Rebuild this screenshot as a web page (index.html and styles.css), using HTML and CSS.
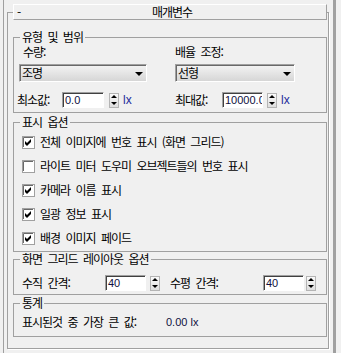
FILE: index.html
```html
<!DOCTYPE html>
<html lang="ko">
<head>
<meta charset="utf-8">
<title>매개변수</title>
<link rel="stylesheet" href="styles.css">
</head>
<body>
<div class="panel">
 <div class="rollout">
  <div class="rollout-title"><span class="toggle">-</span><span class="caption">매개변수</span></div>

  <fieldset class="group group-range">
   <legend>유형 및 범위</legend>
   <div class="range">
    <div class="range-col range-left">
     <div class="label">수량:</div>
     <div class="select"><span>조명</span><i class="caret"></i></div>
     <div class="spin-row">
      <span class="spin-label">최소값:</span>
      <span class="field">0.0</span>
      <span class="spinner"><i class="up"></i><i class="down"></i></span>
      <span class="unit">lx</span>
     </div>
    </div>
    <div class="range-col range-right">
     <div class="label">배율 조정:</div>
     <div class="select"><span>선형</span><i class="caret"></i></div>
     <div class="spin-row">
      <span class="spin-label">최대값:</span>
      <span class="field">10000.0</span>
      <span class="spinner"><i class="up"></i><i class="down"></i></span>
      <span class="unit">lx</span>
     </div>
    </div>
   </div>
  </fieldset>

  <fieldset class="group group-display">
   <legend>표시 옵션</legend>
   <div class="check-row"><svg class="cb" width="13" height="13" viewBox="0 0 13 13"><rect x=".5" y=".5" width="12" height="12" fill="#fff" stroke="#a0a0a0"/><path d="M1.5 11V1.5H11" fill="none" stroke="#696969"/><path d="M3 5l2 2 4-4v3l-4 4-2-2z"/></svg><span>전체 이미지에 번호 표시 (화면 그리드)</span></div>
   <div class="check-row"><svg class="cb" width="13" height="13" viewBox="0 0 13 13"><rect x=".5" y=".5" width="12" height="12" fill="#fff" stroke="#a0a0a0"/><path d="M1.5 11V1.5H11" fill="none" stroke="#696969"/></svg><span>라이트 미터 도우미 오브젝트들의 번호 표시</span></div>
   <div class="check-row"><svg class="cb" width="13" height="13" viewBox="0 0 13 13"><rect x=".5" y=".5" width="12" height="12" fill="#fff" stroke="#a0a0a0"/><path d="M1.5 11V1.5H11" fill="none" stroke="#696969"/><path d="M3 5l2 2 4-4v3l-4 4-2-2z"/></svg><span>카메라 이름 표시</span></div>
   <div class="check-row"><svg class="cb" width="13" height="13" viewBox="0 0 13 13"><rect x=".5" y=".5" width="12" height="12" fill="#fff" stroke="#a0a0a0"/><path d="M1.5 11V1.5H11" fill="none" stroke="#696969"/><path d="M3 5l2 2 4-4v3l-4 4-2-2z"/></svg><span>일광 정보 표시</span></div>
   <div class="check-row"><svg class="cb" width="13" height="13" viewBox="0 0 13 13"><rect x=".5" y=".5" width="12" height="12" fill="#fff" stroke="#a0a0a0"/><path d="M1.5 11V1.5H11" fill="none" stroke="#696969"/><path d="M3 5l2 2 4-4v3l-4 4-2-2z"/></svg><span>배경 이미지 페이드</span></div>
  </fieldset>

  <fieldset class="group group-grid">
   <legend>화면 그리드 레이아웃 옵션</legend>
   <div class="grid-row">
    <div class="grid-cell grid-left">
     <span class="spin-label">수직 간격:</span>
     <span class="field">40</span>
     <span class="spinner"><i class="up"></i><i class="down"></i></span>
    </div>
    <div class="grid-cell grid-right">
     <span class="spin-label">수평 간격:</span>
     <span class="field">40</span>
     <span class="spinner"><i class="up"></i><i class="down"></i></span>
    </div>
   </div>
  </fieldset>

  <fieldset class="group group-stats">
   <legend>통계</legend>
   <div class="stats-row"><span class="stats-label">표시된것 중 가장 큰 값:</span><span class="stats-value">0.00 lx</span></div>
  </fieldset>
 </div>
</div>
</body>
</html>
```

FILE: styles.css
```css
html,body{margin:0;padding:0;}
body{background-color:#f0f0f0;color:#000;font-family:"Noto Sans CJK KR","Noto Sans",sans-serif;font-size:12px;line-height:14px;letter-spacing:-1px;word-spacing:3px;}

/* frame */
.panel{margin-left:3px;width:329px;height:353px;border-left:1px solid #a0a0a0;border-right:3px solid #a0a0a0;overflow:hidden;}
.rollout{margin:12px 4px 0 3px;padding:0 1px 11px 5px;border:1px solid #a0a0a0;box-shadow:1px 1px 0 #fff;}
.rollout-title{display:flex;align-items:center;height:16px;margin-top:-9px;box-sizing:border-box;border-top:1px solid #fff;border-left:1px solid #fff;border-right:1px solid #a0a0a0;border-bottom:1px solid #a0a0a0;background-color:#f0f0f0;position:relative;}
.toggle{position:absolute;left:3px;top:0px;}
.caption{flex:1;text-align:center;padding-left:4px;}

/* group boxes */
.group{margin:0;padding:0;border:1px solid #a0a0a0;min-width:0;}
.group legend{margin-left:6px;padding:0 2px;height:14px;}
.group-range{margin-top:10px;padding-bottom:3px;}
.group-display{margin-top:2px;padding-bottom:1px;}
.group-grid{margin-top:0px;padding-bottom:2px;}
.group-stats{margin-top:1px;padding-bottom:7px;}

/* type and range */
.range{display:grid;grid-template-columns:161px 1fr;}
.label{margin-top:1px;height:14px;}
.range-left .label{margin-left:9px;}
.select{display:flex;align-items:center;justify-content:space-between;height:18px;margin-top:5px;box-sizing:border-box;padding:0 3px 0 2px;border-top:1px solid #a0a0a0;border-left:1px solid #a0a0a0;border-right:1px solid #fff;border-bottom:1px solid #fff;box-shadow:inset 1px 1px 0 #696969;background:linear-gradient(#f4f4f4,#d6d6d6);}
.range-left .select{margin-left:5px;width:128px;}
.range-right .select{width:120px;}
.caret{width:0;height:0;border-left:4px solid transparent;border-right:4px solid transparent;border-top:4px solid #000;margin-top:1px;}
.spin-row{display:flex;align-items:center;height:18px;margin-top:9px;}
.range-left .spin-row{margin-left:3px;}
.range-left .spin-label{width:45px;}
.range-right .spin-label{width:47px;}
.range-left .field{width:42px;}
.range-right .field{width:41px;}
.range-left .spinner{margin-left:5px;}
.range-right .spinner{margin-left:4px;}
.unit{margin-left:4px;font-family:"Liberation Sans",sans-serif;font-size:12px;letter-spacing:0;color:#1c2c9c;}

/* inputs */
.field{display:block;height:16px;box-sizing:border-box;padding:1px 0 0 2px;overflow:hidden;white-space:nowrap;background-color:#fff;border-top:1px solid #a0a0a0;border-left:1px solid #a0a0a0;border-right:1px solid #fff;border-bottom:1px solid #fff;box-shadow:inset 1px 1px 0 #404040;font-family:"Liberation Sans",sans-serif;font-size:11px;line-height:13px;letter-spacing:0;color:#101040;}
.spinner{display:flex;flex-direction:column;justify-content:space-around;align-items:center;width:10px;height:15px;box-sizing:border-box;border:1px solid #b4b4b4;background:linear-gradient(#fafafa,#dedede);}
.spinner .up{width:0;height:0;border-left:3px solid transparent;border-right:3px solid transparent;border-bottom:3px solid #000;}
.spinner .down{width:0;height:0;border-left:3px solid transparent;border-right:3px solid transparent;border-top:3px solid #000;}

/* display options */
.check-row{display:flex;align-items:center;height:24px;padding-left:8px;}
.check-row:first-of-type{margin-top:1px;}
.cb{display:block;margin-right:5px;flex:none;}

/* grid layout */
.grid-row{display:grid;grid-template-columns:148px 1fr;margin-top:8px;height:18px;padding-left:8px;}
.grid-cell{display:flex;align-items:center;}
.grid-left .spin-label{width:83px;}
.grid-left .field{width:41px;}
.grid-left .spinner{margin-left:4px;}
.grid-right .spin-label{width:93px;}
.grid-right .field{width:41px;}
.grid-right .spinner{margin-left:2px;}

/* stats */
.stats-row{display:flex;align-items:center;margin-top:5px;height:14px;padding-left:8px;}
.stats-label{width:144px;}
.stats-value{font-family:"Liberation Sans",sans-serif;font-size:11px;letter-spacing:0;word-spacing:0;color:#101040;}
```
